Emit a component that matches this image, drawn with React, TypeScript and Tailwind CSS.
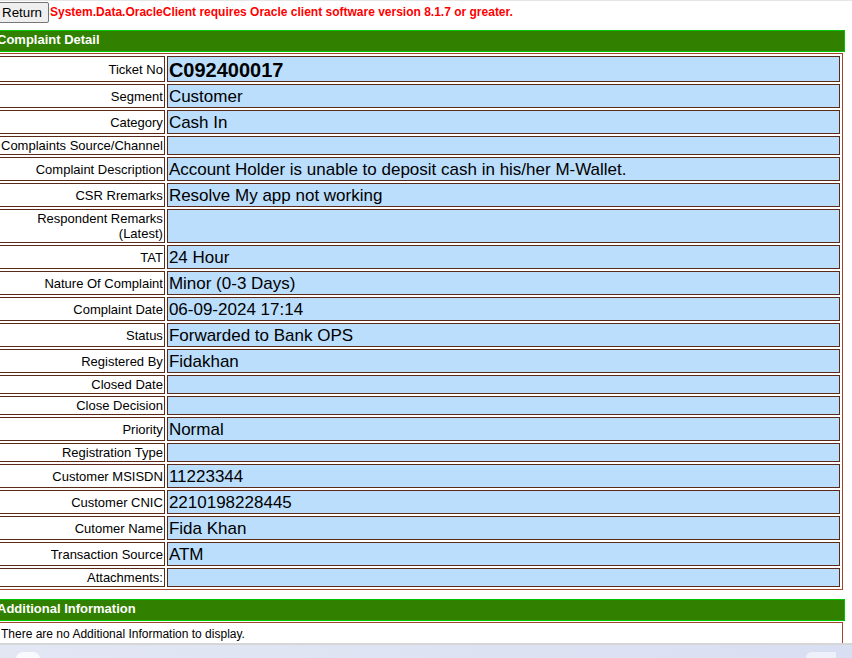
import React from 'react'

type Row = {
  label: React.ReactNode
  value?: string
}

const rows: Row[] = [
  { label: 'Segment', value: 'Customer' },
  { label: 'Category', value: 'Cash In' },
  { label: 'Complaints Source/Channel' },
  { label: 'Complaint Description', value: 'Account Holder is unable to deposit cash in his/her M-Wallet.' },
  { label: 'CSR Rremarks', value: 'Resolve My app not working' },
  {
    label: (
      <>
        Respondent Remarks
        <br />
        (Latest)
      </>
    ),
  },
  { label: 'TAT', value: '24 Hour' },
  { label: 'Nature Of Complaint', value: 'Minor (0-3 Days)' },
  { label: 'Complaint Date', value: '06-09-2024 17:14' },
  { label: 'Status', value: 'Forwarded to Bank OPS' },
  { label: 'Registered By', value: 'Fidakhan' },
  { label: 'Closed Date' },
  { label: 'Close Decision' },
  { label: 'Priority', value: 'Normal' },
  { label: 'Registration Type' },
  { label: 'Customer MSISDN', value: '11223344' },
  { label: 'Customer CNIC', value: '2210198228445' },
  { label: 'Cutomer Name', value: 'Fida Khan' },
  { label: 'Transaction Source', value: 'ATM' },
  { label: 'Attachments:' },
]

function SectionBar({ title }: { title: string }) {
  return (
    <div className="h-[22px] border border-[#00c400] bg-[#318000] px-[1px] text-[13px] font-bold leading-[17px] text-white">
      {title}
    </div>
  )
}

export default function App() {
  return (
    <div
      className="h-[658px] overflow-hidden border-t border-[#e6e6e6] bg-white text-black"
      style={{ fontFamily: '"Liberation Sans", Arial, sans-serif' }}
    >
      <div className="-ml-[5px] w-[850px]">
        <div className="flex h-[22px] items-center gap-[1px]">
          <button className="h-[21px] rounded-[2px] border border-[#767676] bg-[#efefef] px-[6px] text-[13.33px] leading-[17px]">
            Return
          </button>
          <span className="text-[12px] font-bold text-[#ff0000]">
            System.Data.OracleClient requires Oracle client software version 8.1.7 or greater.
          </span>
        </div>

        <div className="mt-[7px]">
          <SectionBar title="Complaint Detail" />
        </div>

        <table className="ml-[1px] mt-[1px] w-[847px] border-separate border-spacing-[2px] border border-[#a0462a]">
          <tbody>
            <tr>
              <td className="w-[165px] whitespace-nowrap border border-[#5c2a18] bg-white p-[1px] text-right align-middle text-[13px] leading-[15px]">
                Ticket No
              </td>
              <td className="border border-[#5c2a18] bg-[#bbdefd] px-[1px] pb-[0px] pt-[2px] text-[20px] font-bold leading-[22px]">
                C092400017
              </td>
            </tr>
            {rows.map((row, i) => (
              <tr key={i}>
                <td className="w-[165px] whitespace-nowrap border border-[#5c2a18] bg-white p-[1px] text-right align-middle text-[13px] leading-[15px]">
                  {row.label}
                </td>
                <td className="border border-[#5c2a18] bg-[#bbdefd] px-[1px] pb-[0px] pt-[2px] align-middle text-[17px] leading-[20px]">
                  {row.value}
                </td>
              </tr>
            ))}
          </tbody>
        </table>

        <div className="mt-[9px]">
          <SectionBar title="Additional Information" />
        </div>
        <div className="ml-[1px] mt-[1px] h-[21px] w-[847px] border border-b-0 border-[#a0462a] px-[4px] pt-[4px] text-[12px] leading-[15px]">
          There are no Additional Information to display.
        </div>
      </div>

      <div className="h-[2px] bg-[#d6d6d6]" />
      <div className="flex h-[20px] items-start justify-between bg-gradient-to-r from-[#e3e7f4] to-[#d9dff2] px-[16px] pt-[7px]">
        <div className="h-[14px] w-[24px] rounded-full bg-white/80" />
        <div className="h-[14px] w-[30px] rounded-tl-[6px] bg-[#eef1f9]" />
      </div>
    </div>
  )
}
